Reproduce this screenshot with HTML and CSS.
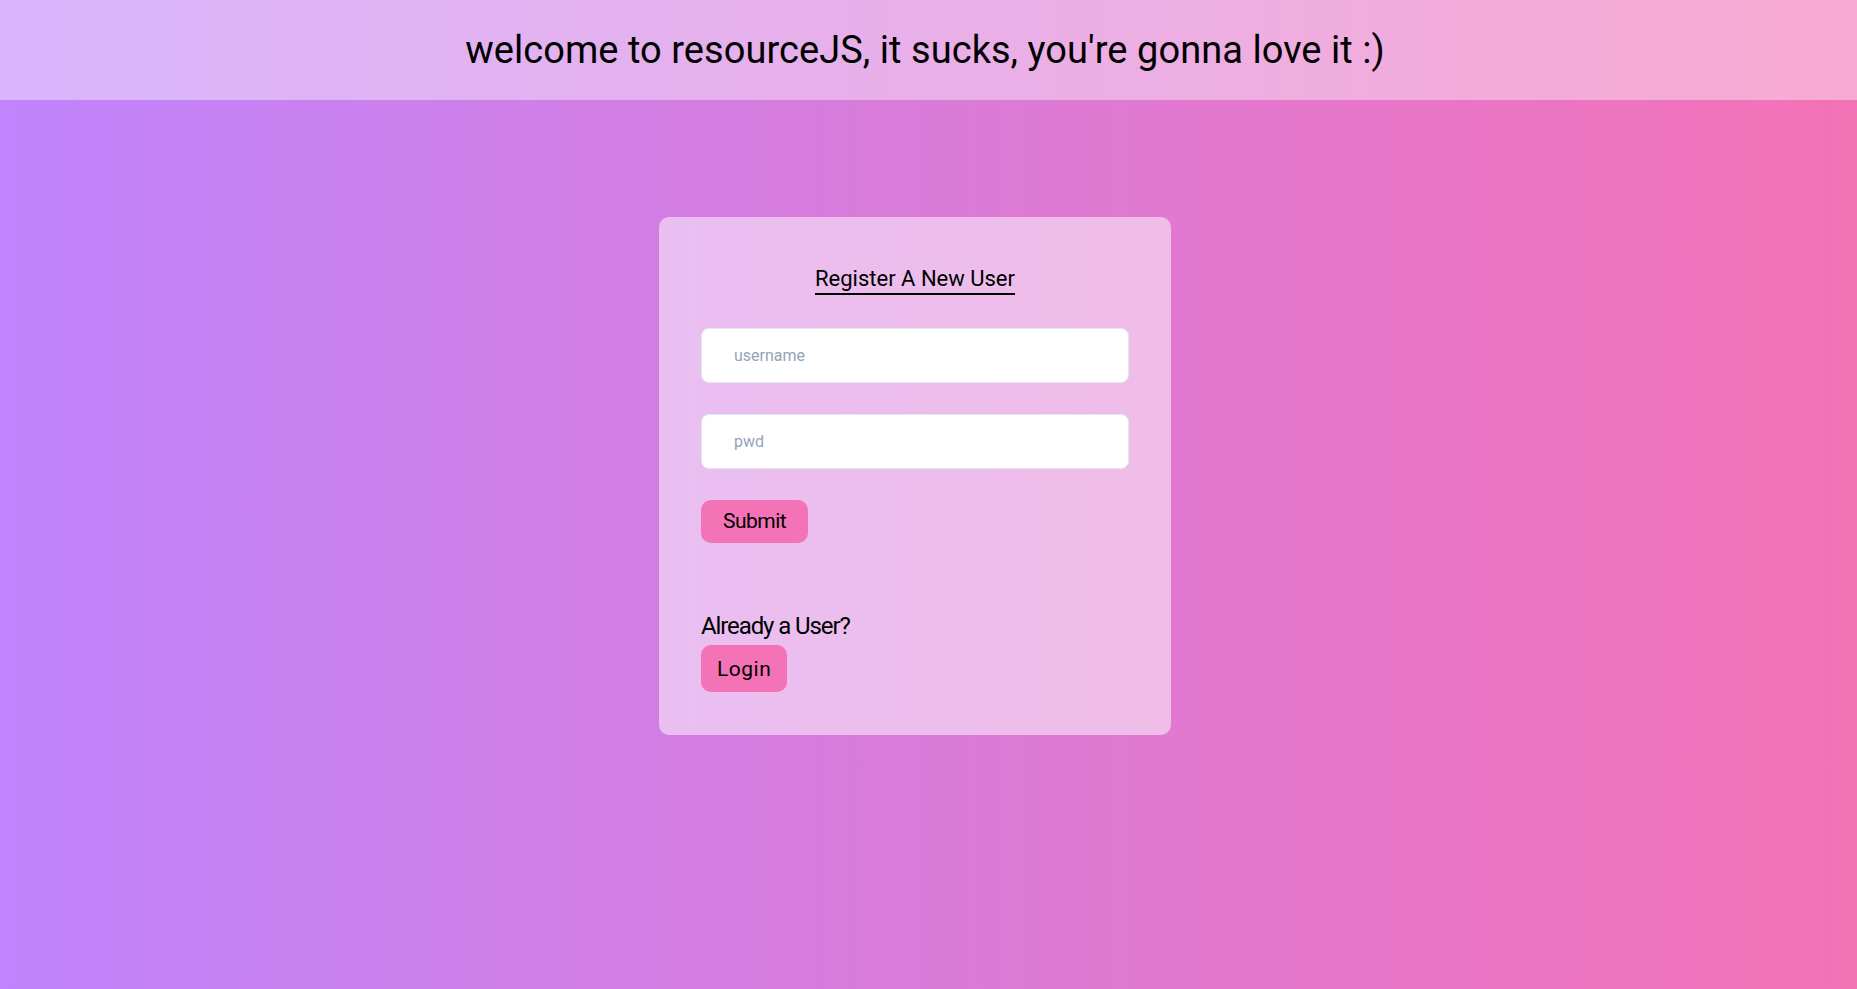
FILE: index.html
```html
<!DOCTYPE html>
<html lang="en">
<head>
<meta charset="utf-8">
<title>resourceJS</title>
<link rel="stylesheet" href="styles.css">
</head>
<body>
<header class="topbar">
  <h1 class="topbar-title">welcome to resourceJS, it sucks, you're gonna love it :)</h1>
</header>
<main class="stage">
  <section class="card">
    <div class="card-head">
      <h2 class="card-title">Register A New User</h2>
    </div>
    <form class="form">
      <input class="field" type="text" placeholder="username">
      <input class="field" type="password" placeholder="pwd">
      <div class="actions">
        <button class="btn btn-submit" type="button">Submit</button>
      </div>
    </form>
    <div class="login">
      <p class="login-text">Already a User?</p>
      <div class="actions">
        <button class="btn btn-login" type="button">Login</button>
      </div>
    </div>
  </section>
</main>
</body>
</html>
```
FILE: styles.css
```css
* { box-sizing: border-box; }
html, body { margin: 0; padding: 0; }
body {
  min-height: 100vh;
  background: linear-gradient(to right, #c084fc, #f472b6);
  font-family: "Roboto", "Inter", "Liberation Sans", sans-serif;
  color: #000;
}
.topbar {
  height: 100px;
  background: rgba(255, 255, 255, 0.4);
  display: flex;
  align-items: center;
  justify-content: center;
  padding-right: 7px;
}
.topbar-title {
  margin: 0;
  font-size: 38px;
  font-weight: 400;
  line-height: 44px;
  letter-spacing: 0.05px;
}
.stage {
  display: flex;
  justify-content: center;
  padding: 117px 27px 0 0;
}
.card {
  width: 512px;
  background: rgba(255, 255, 255, 0.5);
  border-radius: 10px;
  padding: 48px 42px 43px;
}
.card-head {
  display: flex;
  justify-content: center;
}
.card-title {
  margin: 0;
  font-size: 22px;
  font-weight: 400;
  line-height: 28px;
  border-bottom: 2px solid #000;
}
.form {
  display: flex;
  flex-direction: column;
  gap: 31px;
  margin-top: 33px;
}
.field {
  height: 55px;
  width: 100%;
  border: 1px solid #e2e8f0;
  border-radius: 8px;
  background: #fff;
  padding: 0 32px;
  font-family: inherit;
  font-size: 16px;
  outline: none;
}
.field::placeholder { color: #94a3b8; }
.actions { display: flex; }
.btn {
  border: none;
  background: #f472b6;
  color: #000;
  font-family: inherit;
  cursor: pointer;
  border-radius: 10px;
}
.btn-submit {
  font-size: 21px;
  line-height: 28px;
  padding: 7px 22px 8px;
  letter-spacing: -0.5px;
}
.login {
  margin-top: 67px;
}
.login-text {
  margin: 0 0 3px;
  font-size: 24px;
  line-height: 32px;
  letter-spacing: -1.1px;
}
.btn-login {
  font-size: 21px;
  line-height: 28px;
  padding: 10px 16px 9px;
  letter-spacing: 0.5px;
}
```
